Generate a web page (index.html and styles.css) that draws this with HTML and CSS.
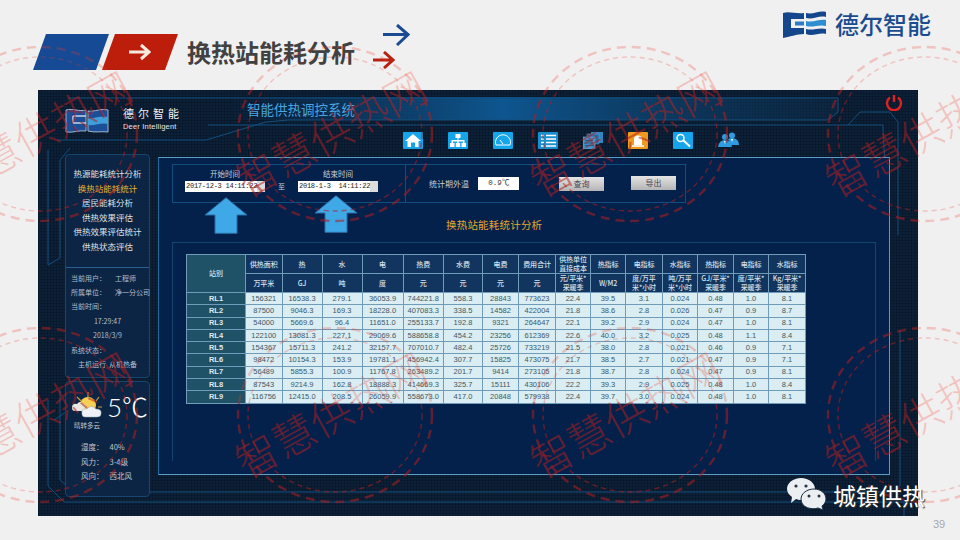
FILE: index.html
```html
<!DOCTYPE html>
<html lang="zh-CN">
<head>
    <meta charset="UTF-8">
    <title>换热站能耗分析</title>
    <link rel="stylesheet" href="styles.css">
</head>
<body>
<div class="slide">
    <header class="slide-head">
        <div class="flag flag-blue"></div>
        <div class="flag flag-red">
            <svg width="24" height="18" viewBox="0 0 24 18"><path d="M1 9H21M13 2L21 9L13 16" fill="none" stroke="#f6e9df" stroke-width="3"/></svg>
        </div>
        <h1 class="slide-title">换热站能耗分析</h1>
        <div class="head-arrows">
            <svg class="arrow-blue" width="27" height="22" viewBox="0 0 27 22"><path d="M0 10.5H24M14 1L25 10.5L14 21" fill="none" stroke="#1c4a92" stroke-width="3"/></svg>
            <svg class="arrow-red" width="22" height="18" viewBox="0 0 22 18"><path d="M0 9H19M11 1L20 9L11 17" fill="none" stroke="#b8200f" stroke-width="3"/></svg>
        </div>
        <div class="brand-top">
            <svg width="44" height="28" viewBox="0 0 44 28">
                <path d="M0 3C6 1 13 4 21 3V9H8V18H21V24C14 24 6 27 0 28Z" fill="#14468c"/>
                <path d="M12 11.500H21V15.500H12Z" fill="#2a7cc4"/>
                <path d="M23 3C30 5 36 0 43 2V7C36 5 30 10 23 8Z" fill="#14468c"/>
                <path d="M23 11C30 13 36 9 43 10V16C36 14 30 18 23 16Z" fill="#2f8ed0"/>
                <path d="M23 19C30 21 36 17 43 19V24C36 22 30 27 23 24Z" fill="#14468c"/>
            </svg>
            <span class="brand-top-name">德尔智能</span>
        </div>
    </header>

    <section class="panel">
        <svg class="panel-lines" width="880" height="426" viewBox="0 0 880 426">
            <defs>
                <linearGradient id="band" x1="0" x2="1" y1="0" y2="0">
                    <stop offset="0" stop-color="#0d4a80" stop-opacity="0"/>
                    <stop offset=".45" stop-color="#0e568f"/>
                    <stop offset="1" stop-color="#0d3a60" stop-opacity=".25"/>
                </linearGradient>
            </defs>
            <path d="M195 7H800V22L790 30H190Z" fill="url(#band)"/>
            <g fill="none" stroke="#124f7e">
                <path d="M30 8H800V22L790 30H250L228 32L168 50H20"/>
                <path d="M170 35H845V40L850 125M810 35L822 22H852L860 32V145"/>
                <path d="M10 60V175L22 168V70L32 58"/>
                <path d="M10 310V396L26 412H866V440"/>
                <path d="M22 300V390L36 402H857L862 396V240"/>
                <path d="M16 330L28 322V400"/>
            </g>
        </svg>

        <div class="panel-top">
            <div class="brand">
                <svg width="44" height="25" viewBox="0 0 44 25">
                    <path d="M1 2C8 0 14 4 21 2V23C14 22 8 25 1 24Z" fill="#1c4f98" stroke="#9fb6d0"/>
                    <path d="M23 3C30 4 36 0 43 2V24C36 23 30 25 23 23Z" fill="#1c4f98" stroke="#9fb6d0"/>
                    <path d="M8 8H21M8 15H21M8 8V15" fill="none" stroke="#c6d3e2" stroke-width="1.5"/>
                    <path d="M23 10C30 11 36 7 43 9V16C36 14 30 18 23 17Z" fill="#3da0dc"/>
                </svg>
                <div class="brand-text">
                    <div class="brand-name">德尔智能</div>
                    <div class="brand-en">Deer Intelligent</div>
                </div>
            </div>
            <div class="top-mid">
                <div class="sys-title">智能供热调控系统</div>
                <nav class="nav">
                    <svg class="nav-icon" viewBox="0 0 20 17"><rect width="20" height="17" rx="1" fill="#16a4ea"/><path d="M10 2L2 9H4.5V15H8V10.5H12V15H15.5V9H18Z" fill="#fff"/></svg>
                    <svg class="nav-icon" viewBox="0 0 20 17"><rect width="20" height="17" rx="1" fill="#16a4ea"/><path d="M7.5 2H12.5V6H10.5V8H16.5V11H18V15H13.5V11H15V9.5H10.7V11H12.2V15H7.8V11H9.3V9.5H5V11H6.5V15H2V11H3.5V8H9.5V6H7.5Z" fill="#fff"/></svg>
                    <svg class="nav-icon" viewBox="0 0 20 17"><rect width="20" height="17" rx="1" fill="#16a4ea"/><path d="M3 13A7.5 7.5 0 1 1 17 13Z" fill="none" stroke="#fff"/><path d="M10 12L7 8" stroke="#fff"/></svg>
                    <svg class="nav-icon" viewBox="0 0 20 17"><rect width="20" height="17" rx="1" fill="#1a8fd0"/><path d="M8 3.5H18M8 7H18M8 10.5H18M8 14H18M3 3.5H6M3 7H6M3 10.5H6M3 14H6" stroke="#fff" stroke-width="1.5"/></svg>
                    <svg class="nav-icon" viewBox="0 0 20 17"><rect x="8" width="12" height="11" fill="#2f86c0"/><rect x="4" y="2" width="12" height="10" fill="#1f6ea8" stroke="#5fa8d4" stroke-width=".5"/><rect y="5" width="12" height="12" fill="#3a90c6" stroke="#7cc0e4" stroke-width=".5"/><path d="M2 8.5H10M2 11H10M2 13.5H10" stroke="#1c5c8e"/></svg>
                    <svg class="nav-icon" viewBox="0 0 20 17"><rect width="20" height="17" rx="1" fill="#f09a20"/><path d="M6 13V7Q6 3.5 10 3.5T14 7V13Z" fill="#fff"/><rect x="4" y="13" width="12" height="2" fill="#fdeccc"/></svg>
                    <svg class="nav-icon" viewBox="0 0 20 17"><rect width="20" height="17" rx="1" fill="#16a4ea"/><circle cx="7.5" cy="6" r="3.5" fill="none" stroke="#fff" stroke-width="1.5"/><path d="M10.5 8.5L17 14.5" stroke="#fff" stroke-width="2"/></svg>
                    <svg class="nav-icon nav-users" viewBox="0 0 21 17"><circle cx="7" cy="5" r="3" fill="#2f9be0"/><circle cx="14" cy="3.5" r="3" fill="#2f9be0"/><path d="M0 15Q1 8 7 8Q13 8 14 15Z" fill="#2f9be0"/><path d="M10 7Q14 5 18 7Q21 9 21 13H13Z" fill="#2f9be0"/><path d="M6 9L7 12L8 9ZM13 7L14 10L15 7Z" fill="#fff"/></svg>
                </nav>
            </div>
            <svg class="power" width="18" height="17" viewBox="0 0 18 17"><path d="M5 3.5A7 7 0 1 0 13 3.5" fill="none" stroke="#dd2222" stroke-width="2.4"/><path d="M9 1V8" stroke="#dd2222" stroke-width="2.4"/></svg>
        </div>

        <div class="panel-body">
            <aside class="sidebar">
                <div class="side-card side-info">
                    <ul class="menu">
                        <li>热源能耗统计分析</li>
                        <li class="active">换热站能耗统计</li>
                        <li>居民能耗分析</li>
                        <li>供热效果评估</li>
                        <li>供热效果评估统计</li>
                        <li>供热状态评估</li>
                    </ul>
                    <div class="info">
                        <p><span>当前用户：</span><span>工程师</span></p>
                        <p><span>所属单位：</span><span>净一分公司</span></p>
                        <p><span>当前时间：</span></p>
                        <p class="center">17:29:47</p>
                        <p class="center">2018/3/9</p>
                        <p><span>系统状态：</span></p>
                        <p class="center">主机运行&nbsp;&nbsp;从机热备</p>
                    </div>
                </div>
                <div class="side-card side-weather">
                    <div class="weather-top">
                        <div class="weather-pic">
                            <svg width="32" height="28" viewBox="0 0 32 28">
                                <g stroke="#c99a3a" stroke-width="1.2"><path d="M17 0V5M6 5L10 9M28 5L25 9M31 15H27M4 14H8"/></g>
                                <circle cx="17" cy="13" r="8" fill="#f7cf52"/>
                                <path d="M1 16Q1 11 6 12Q9 8 12 12Q15 12 15 16Q15 19 12 19H4Q1 19 1 16Z" fill="#e9e6df"/>
                                <path d="M11 22Q10 16 16 17Q20 12 25 17Q31 17 30 22Q30 25 26 25H14Q11 25 11 22Z" fill="#eef2f6" stroke="#9aa8b4" stroke-width=".5"/>
                            </svg>
                            <span class="weather-name">晴转多云</span>
                        </div>
                        <div class="weather-temp">5℃</div>
                    </div>
                    <p><span>湿度：</span><span>40%</span></p>
                    <p><span>风力：</span><span>3-4级</span></p>
                    <p><span>风向：</span><span>西北风</span></p>
                </div>
            </aside>

            <main class="main">
                <form class="filter">
                    <div class="filter-dates">
                        <div class="date-field">
                            <label>开始时间</label>
                            <div class="spin"><span>2017-12-3 14:11:22</span><i></i></div>
                        </div>
                        <span class="date-to">至</span>
                        <div class="date-field">
                            <label>结束时间</label>
                            <div class="spin"><span>2018-1-3&nbsp;&nbsp;14:11:22</span><i></i></div>
                        </div>
                    </div>
                    <div class="filter-right">
                        <span class="temp-label">统计期外温</span>
                        <span class="temp-value">0.9℃</span>
                        <button type="button" class="btn btn-query">查询</button>
                        <button type="button" class="btn btn-export">导出</button>
                    </div>
                </form>
                <h3 class="table-title">换热站能耗统计分析</h3>
                <div class="table-wrap">
                    <table class="stats">
                        <colgroup>
                            <col><col><col><col><col><col><col><col><col><col><col><col><col><col><col><col>
                        </colgroup>
                        <thead>
                            <tr><th class="station" rowspan="2">站别</th><th>供热面积</th><th>热</th><th>水</th><th>电</th><th>热费</th><th>水费</th><th>电费</th><th>费用合计</th><th>供热单位<br>直接成本</th><th>热指标</th><th>电指标</th><th>水指标</th><th>热指标</th><th>电指标</th><th>水指标</th></tr>
                            <tr><th>万平米</th><th>GJ</th><th>吨</th><th>度</th><th>元</th><th>元</th><th>元</th><th>元</th><th>元/平米*<br>采暖季</th><th>W/M2</th><th>度/万平<br>米*小时</th><th>吨/万平<br>米*小时</th><th>GJ/平米*<br>采暖季</th><th>度/平米*<br>采暖季</th><th>Kg/平米*<br>采暖季</th></tr>
                        </thead>
                        <tbody>
                            <tr><th>RL1</th><td>156321</td><td>16538.3</td><td>279.1</td><td>36053.9</td><td>744221.8</td><td>558.3</td><td>28843</td><td>773623</td><td>22.4</td><td>39.5</td><td>3.1</td><td>0.024</td><td>0.48</td><td>1.0</td><td>8.1</td></tr>
                            <tr><th>RL2</th><td>87500</td><td>9046.3</td><td>169.3</td><td>18228.0</td><td>407083.3</td><td>338.5</td><td>14582</td><td>422004</td><td>21.8</td><td>38.6</td><td>2.8</td><td>0.026</td><td>0.47</td><td>0.9</td><td>8.7</td></tr>
                            <tr><th>RL3</th><td>54000</td><td>5669.6</td><td>96.4</td><td>11651.0</td><td>255133.7</td><td>192.8</td><td>9321</td><td>264647</td><td>22.1</td><td>39.2</td><td>2.9</td><td>0.024</td><td>0.47</td><td>1.0</td><td>8.1</td></tr>
                            <tr><th>RL4</th><td>122100</td><td>13081.3</td><td>227.1</td><td>29069.6</td><td>588658.8</td><td>454.2</td><td>23256</td><td>612369</td><td>22.6</td><td>40.0</td><td>3.2</td><td>0.025</td><td>0.48</td><td>1.1</td><td>8.4</td></tr>
                            <tr><th>RL5</th><td>154367</td><td>15711.3</td><td>241.2</td><td>32157.7</td><td>707010.7</td><td>482.4</td><td>25726</td><td>733219</td><td>21.5</td><td>38.0</td><td>2.8</td><td>0.021</td><td>0.46</td><td>0.9</td><td>7.1</td></tr>
                            <tr><th>RL6</th><td>98472</td><td>10154.3</td><td>153.9</td><td>19781.1</td><td>456942.4</td><td>307.7</td><td>15825</td><td>473075</td><td>21.7</td><td>38.5</td><td>2.7</td><td>0.021</td><td>0.47</td><td>0.9</td><td>7.1</td></tr>
                            <tr><th>RL7</th><td>56489</td><td>5855.3</td><td>100.9</td><td>11767.8</td><td>263489.2</td><td>201.7</td><td>9414</td><td>273105</td><td>21.8</td><td>38.7</td><td>2.8</td><td>0.024</td><td>0.47</td><td>0.9</td><td>8.1</td></tr>
                            <tr><th>RL8</th><td>87543</td><td>9214.9</td><td>162.8</td><td>18888.3</td><td>414669.3</td><td>325.7</td><td>15111</td><td>430106</td><td>22.2</td><td>39.3</td><td>2.9</td><td>0.025</td><td>0.48</td><td>1.0</td><td>8.4</td></tr>
                            <tr><th>RL9</th><td>116756</td><td>12415.0</td><td>208.5</td><td>26059.9</td><td>558673.0</td><td>417.0</td><td>20848</td><td>579938</td><td>22.4</td><td>39.7</td><td>3.0</td><td>0.024</td><td>0.48</td><td>1.0</td><td>8.1</td></tr>
                        </tbody>
                    </table>
                </div>
                <svg class="big-arrow big-arrow-1" width="44" height="37" viewBox="0 0 44 37"><path d="M22 .7L43 18H33V36.3H11V18H1Z" fill="#3fa9e8" stroke="#2a6ea6"/></svg>
                <svg class="big-arrow big-arrow-2" width="44" height="38" viewBox="0 0 44 38"><path d="M22 .7L43 18H33V37.3H11V18H1Z" fill="#3fa9e8" stroke="#2a6ea6"/></svg>
            </main>
        </div>
    </section>

    <!-- 水印盖在最上层，深色画面上再压一层暗红 -->
    <svg class="watermark" width="960" height="540" viewBox="0 0 960 540">
        <defs>
            <g id="stamp">
                <ellipse rx="97" ry="87" fill="none" stroke-width="2.4" stroke-dasharray="9 6"/>
                <ellipse rx="87" ry="77" fill="none" stroke-width="1.4" stroke-dasharray="5 4"/>
                <text transform="rotate(-29)" x="-4" y="14" text-anchor="middle" class="stamp-text">智慧供热网</text>
            </g>
            <g id="stamps">
                <use href="#stamp" x="40" y="134"/>
                <use href="#stamp" x="335" y="134"/>
                <use href="#stamp" x="630" y="134"/>
                <use href="#stamp" x="925" y="134"/>
                <use href="#stamp" x="40" y="415"/>
                <use href="#stamp" x="335" y="415"/>
                <use href="#stamp" x="630" y="415"/>
                <use href="#stamp" x="925" y="415"/>
            </g>
            <clipPath id="on-dark">
                <path clip-rule="evenodd" d="M38 90H918V516H38ZM186 254H805V402H186Z"/>
            </clipPath>
        </defs>
        <use href="#stamps" class="stamp-light"/>
        <g clip-path="url(#on-dark)">
            <use href="#stamps" class="stamp-dark"/>
        </g>
    </svg>

    <div class="wechat">
        <svg width="40" height="33" viewBox="0 0 40 33">
            <path d="M14 0C22 0 28 5 28 11C28 17 22 22 14 22C12 22 10 21.500 9 21L4 25L5 19C2 17 0 14 0 11C0 5 6 0 14 0Z" fill="#eceff2"/>
            <path d="M27 11C34 11 39 15.500 39 21C39 24 37 26.500 35 28L36 32L31 30C25 32 14 30 14 21C14 15.500 20 11 27 11Z" fill="#eceff2" stroke="#1a2c44"/>
            <circle cx="9" cy="8" r="1.600" fill="#2a3444"/><circle cx="19" cy="8" r="1.600" fill="#2a3444"/>
            <circle cx="22" cy="18" r="1.500" fill="#2a3444"/><circle cx="32" cy="18" r="1.500" fill="#2a3444"/>
        </svg>
        <span class="wechat-name">城镇供热</span>
    </div>
    <div class="page-no">39</div>
</div>
</body>
</html>
```

FILE: styles.css
```css
* {
    box-sizing: border-box;
}
html, body {
    margin: 0;
    padding: 0;
}
body {
    font-family: "Noto Sans CJK SC", "Liberation Sans", sans-serif;
    background: #f0f0f0;
}
.slide {
    position: relative;
    width: 960px;
    height: 540px;
    overflow: hidden;
    background: #f0f0f0;
}

/* 页眉 */
.slide-head {
    position: relative;
    display: flex;
    align-items: flex-start;
    height: 90px;
    padding: 34px 0 0 33px;
}
.flag {
    width: 76px;
    height: 36px;
    display: flex;
    align-items: center;
    justify-content: center;
    clip-path: polygon(13px 0, 100% 0, 63px 100%, 0 100%);
}
.flag-blue {
    background: #174a94;
}
.flag-red {
    margin-left: -7px;
    background: #bd1e0c;
}
.slide-title {
    margin: -2px 0 0 9px;
    font-size: 24px;
    line-height: 40px;
    font-weight: 700;
    color: #414141;
}
.head-arrows {
    display: flex;
    flex-direction: column;
    margin: -10px 0 0 28px;
    width: 30px;
}
.arrow-red {
    margin: 5px 0 0 -10px;
}
.brand-top {
    display: flex;
    align-items: center;
    gap: 8px;
    margin: -25px 0 0 auto;
    padding-right: 29px;
}
.brand-top-name {
    font-size: 24px;
    line-height: 30px;
    font-weight: 500;
    color: #1b4c8f;
}

/* 系统画面 */
.panel {
    position: relative;
    width: 880px;
    height: 426px;
    margin-left: 38px;
    padding-left: 27px;
    background-color: #0c2038;
    background-image:
        linear-gradient(rgba(0, 0, 0, .16) 1px, transparent 1px),
        linear-gradient(90deg, rgba(0, 0, 0, .16) 1px, transparent 1px);
    background-size: 3px 3px;
}
.panel-lines {
    position: absolute;
    left: 0;
    top: 0;
}
.panel-top {
    position: relative;
    display: flex;
    height: 64px;
}
.brand {
    display: flex;
    align-items: flex-start;
    gap: 14px;
    width: 182px;
    padding-top: 18px;
}
.brand-name {
    font-family: "Liberation Serif", "Noto Sans CJK SC", serif;
    font-size: 11px;
    line-height: 13px;
    letter-spacing: 4px;
    color: #f0f2f4;
}
.brand-en {
    font-family: "Liberation Sans", sans-serif;
    font-size: 7.5px;
    line-height: 11px;
    letter-spacing: .2px;
    color: #e4e8ee;
}
.top-mid {
    flex: 1;
}
.sys-title {
    height: 42px;
    padding-top: 9px;
    font-size: 13.5px;
    line-height: 20px;
    color: #4ba4e0;
}
.nav {
    display: flex;
    gap: 25px;
    margin-left: 156px;
}
.nav-icon {
    display: block;
    width: 20px;
    height: 17px;
}
.nav-users {
    width: 21px;
}
.power {
    margin: 4px 15px 0 0;
}
.panel-body {
    position: relative;
    display: flex;
    gap: 8px;
}

/* 左栏 */
.sidebar {
    display: flex;
    flex-direction: column;
    gap: 3px;
    width: 85px;
}
.side-card {
    border: 1px solid #15466f;
    border-radius: 4px;
    background: #0c2544;
    color: #b4bfcc;
}
.side-info {
    height: 224px;
}
.menu {
    list-style: none;
    margin: 0;
    padding: 11px 0 13px;
}
.menu li {
    height: 14.6px;
    font-size: 8.5px;
    line-height: 14.6px;
    text-align: center;
    white-space: nowrap;
    color: #dde2e8;
}
.menu .active {
    color: #eab02f;
}
.info {
    border-top: 1px solid #2a5f90;
    padding: 3px 0 0 5px;
    font-size: 7px;
}
.info p {
    display: flex;
    gap: 9px;
    margin: 0;
    height: 14.4px;
    line-height: 14.4px;
    white-space: nowrap;
}
.info .center {
    justify-content: center;
    padding-right: 5px;
}
.side-weather {
    height: 116px;
    padding: 10px 0 0 15px;
    font-size: 7.5px;
    color: #c0c9d4;
}
.weather-top {
    display: flex;
    gap: 2px;
    margin: 0 0 10px -12px;
}
.weather-pic {
    display: flex;
    flex-direction: column;
    align-items: center;
    width: 36px;
}
.weather-pic svg {
    display: block;
}
.weather-name {
    font-size: 6.5px;
    line-height: 10px;
    white-space: nowrap;
}
.weather-temp {
    font-family: Lato, "Noto Sans CJK SC", sans-serif;
    font-size: 26px;
    line-height: 30px;
    font-weight: 300;
    color: #fff;
    white-space: nowrap;
}
.side-weather p {
    display: flex;
    gap: 6px;
    margin: 0;
    height: 14.6px;
    line-height: 14.6px;
}

/* 主区域 */
.main {
    position: relative;
    width: 732px;
    height: 318px;
    margin-top: 3px;
    padding: 6px 0 0 13px;
    border: 1px solid #5d9cc4;
    border-left-color: #1d6a9e;
    background: #03214a;
}
.filter {
    display: flex;
    width: 514px;
    height: 39px;
    border: 1px solid #114e80;
}
.filter-dates {
    display: flex;
    align-items: flex-end;
    gap: 9px;
    width: 233px;
    padding: 0 0 10px 12px;
    border-right: 1px solid #114e80;
}
.date-field {
    display: flex;
    flex-direction: column;
    align-items: center;
    gap: 1px;
}
.date-field label {
    font-size: 7.5px;
    line-height: 12px;
    color: #c8d0da;
}
.spin {
    display: flex;
    width: 80px;
    height: 11px;
    padding-left: 1px;
    background: #fff;
    font-family: "Liberation Mono", monospace;
    font-size: 7px;
    line-height: 11px;
    letter-spacing: -.25px;
    color: #222;
    white-space: nowrap;
}
.spin span {
    flex: 1;
}
.spin i {
    width: 8px;
    background: #dcdcdc;
}
.date-to {
    font-size: 7px;
    line-height: 11px;
    color: #c8d0da;
    width: 15px;
    text-align: center;
}
.filter-right {
    display: flex;
    align-items: flex-start;
    padding: 12px 0 0 23px;
}
.temp-label {
    width: 49px;
    font-size: 8px;
    line-height: 13px;
    color: #c8d0da;
    white-space: nowrap;
}
.temp-value {
    width: 41px;
    height: 13px;
    background: #fff;
    font-family: "Liberation Mono", monospace;
    font-size: 7.5px;
    line-height: 13px;
    text-align: center;
    color: #333;
}
.btn {
    height: 14px;
    width: 45px;
    padding: 0;
    border: 0;
    background: linear-gradient(#e4e4e4, #b4b4b4);
    font-family: inherit;
    font-size: 8px;
    line-height: 14px;
    color: #445;
}
.btn-query {
    margin-left: 40px;
}
.btn-export {
    margin: -1px 0 0 27px;
}
.table-title {
    margin: 12px 0 0 274px;
    height: 27px;
    font-size: 10.5px;
    line-height: 20px;
    font-weight: 400;
    letter-spacing: .2px;
    color: #e8a630;
}
.table-wrap {
    width: 704px;
    height: 219px;
    padding: 11px 0 0 13px;
    border: 1px solid #0f456f;
    border-bottom: 0;
}
.stats {
    width: 619px;
    table-layout: fixed;
    border-collapse: collapse;
    border: 1px solid #6f9cb8;
    font-family: "Liberation Sans", "Noto Sans CJK SC", sans-serif;
    font-size: 7.5px;
}
.stats col:nth-child(1) { width: 59px; }
.stats col:nth-child(2) { width: 36.5px; }
.stats col:nth-child(3) { width: 40px; }
.stats col:nth-child(4) { width: 40px; }
.stats col:nth-child(5) { width: 41px; }
.stats col:nth-child(6) { width: 40.5px; }
.stats col:nth-child(7) { width: 39px; }
.stats col:nth-child(8) { width: 36px; }
.stats col:nth-child(9) { width: 37px; }
.stats col:nth-child(10) { width: 35px; }
.stats col:nth-child(11) { width: 35px; }
.stats col:nth-child(12) { width: 37px; }
.stats col:nth-child(13) { width: 35px; }
.stats col:nth-child(14) { width: 36px; }
.stats col:nth-child(15) { width: 35px; }
.stats col:nth-child(16) { width: 37px; }
.stats th,
.stats td {
    padding: 0;
    border: 1px solid #6f9cb8;
    text-align: center;
    white-space: nowrap;
    overflow: hidden;
}
.stats thead th {
    height: 19px;
    font-family: "Noto Sans CJK SC", "Liberation Sans", sans-serif;
    font-size: 7px;
    line-height: 9px;
    font-weight: 500;
    letter-spacing: -.1px;
    color: #d6e2ec;
    background: #12355f;
}
.stats thead .station {
    background: #1f5266;
}
.stats tbody th {
    height: 12.3px;
    line-height: 10px;
    font-weight: 700;
    color: #dfe9ee;
    background: #1f5266;
}
.stats tbody td {
    line-height: 10px;
    color: #3d5866;
    background: #d9edf3;
}
.big-arrow {
    position: absolute;
}
.big-arrow-1 {
    left: 45px;
    top: 39px;
}
.big-arrow-2 {
    left: 155px;
    top: 37px;
}

/* 水印、角标 */
.watermark {
    position: absolute;
    left: 0;
    top: 0;
    pointer-events: none;
}
.stamp-light {
    stroke: rgba(240, 60, 40, .25);
    fill: rgba(240, 60, 40, .25);
}
.stamp-dark {
    stroke: rgba(150, 20, 30, .4);
    fill: rgba(150, 20, 30, .4);
}
.stamp-text {
    stroke: none;
    font-size: 42px;
    font-weight: 300;
}
.wechat {
    position: absolute;
    left: 787px;
    top: 478px;
    display: flex;
    align-items: center;
    gap: 6px;
}
.wechat-name {
    font-size: 23px;
    line-height: 32px;
    color: #fff;
    text-shadow: 1px 1px 1px #333;
    white-space: nowrap;
}
.page-no {
    position: absolute;
    left: 933px;
    top: 517px;
    font-family: "Liberation Sans", sans-serif;
    font-size: 11px;
    line-height: 14px;
    color: #a9a9a9;
}
```
